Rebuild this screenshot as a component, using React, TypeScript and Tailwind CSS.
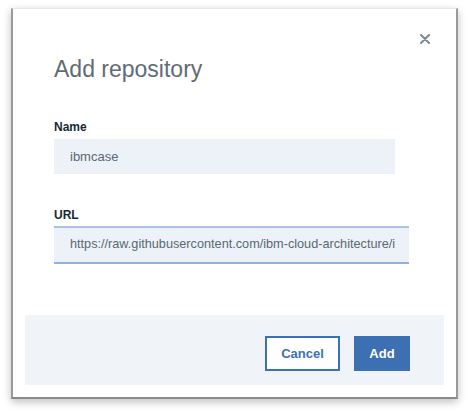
export default function App() {
  return (
    <div
      className="min-h-screen bg-white pl-[11px] pt-[8px]"
      style={{ fontFamily: '"Liberation Sans", Arial, sans-serif' }}
    >
      <div className="relative flex h-[391px] w-[447px] flex-col border-x-2 border-b-2 border-t border-x-[#9a9a9a] border-b-[#8a8a8a] border-t-[#e6e6e6] bg-white shadow-[0_3px_8px_rgba(0,0,0,0.25)]">
        {/* close */}
        <button className="absolute right-[26px] top-[25px] p-0">
          <svg width="10" height="10" viewBox="0 0 10 10">
            <path
              d="M1 1 L9 9 M9 1 L1 9"
              stroke="#7c8893"
              strokeWidth="2"
              strokeLinecap="round"
            />
          </svg>
        </button>

        <div className="pl-[41px] pt-[46px]">
          <h1 className="text-[23px] leading-[29px] font-light text-[#5f6b75]">
            Add repository
          </h1>

          <label className="mt-[35px] block text-[12px] leading-[16px] font-bold text-[#152934]">
            Name
          </label>
          <div className="mt-[4px] flex h-[35px] w-[341px] items-center bg-[#edf2f9] pl-[16px] text-[13px] text-[#5a6872]">
            ibmcase
          </div>

          <label className="mt-[33px] block text-[12px] leading-[16px] font-bold text-[#152934]">
            URL
          </label>
          <div className="mt-[3px] flex h-[38px] w-[355px] items-center overflow-hidden whitespace-nowrap border-y-2 border-t-[#a9c3e8] border-b-[#8fb0e0] bg-[#edf2f9] pl-[16px] pr-[14px] text-[12.7px] text-[#5a6872]">
            <span className="overflow-hidden">
              https://raw.githubusercontent.com/ibm-cloud-architecture/i
            </span>
          </div>
        </div>

        <div className="mx-[12px] mt-[51px] flex h-[70px] justify-end gap-[14px] bg-[#f0f4f8] pr-[34px] pt-[21px]">
          <button className="h-[35px] w-[75px] border-2 border-[#3d70b2] bg-white text-[13px] font-bold text-[#3d70b2]">
            Cancel
          </button>
          <button className="h-[35px] w-[56px] bg-[#3d70b2] text-[13px] font-bold text-white">
            Add
          </button>
        </div>
      </div>
    </div>
  );
}
